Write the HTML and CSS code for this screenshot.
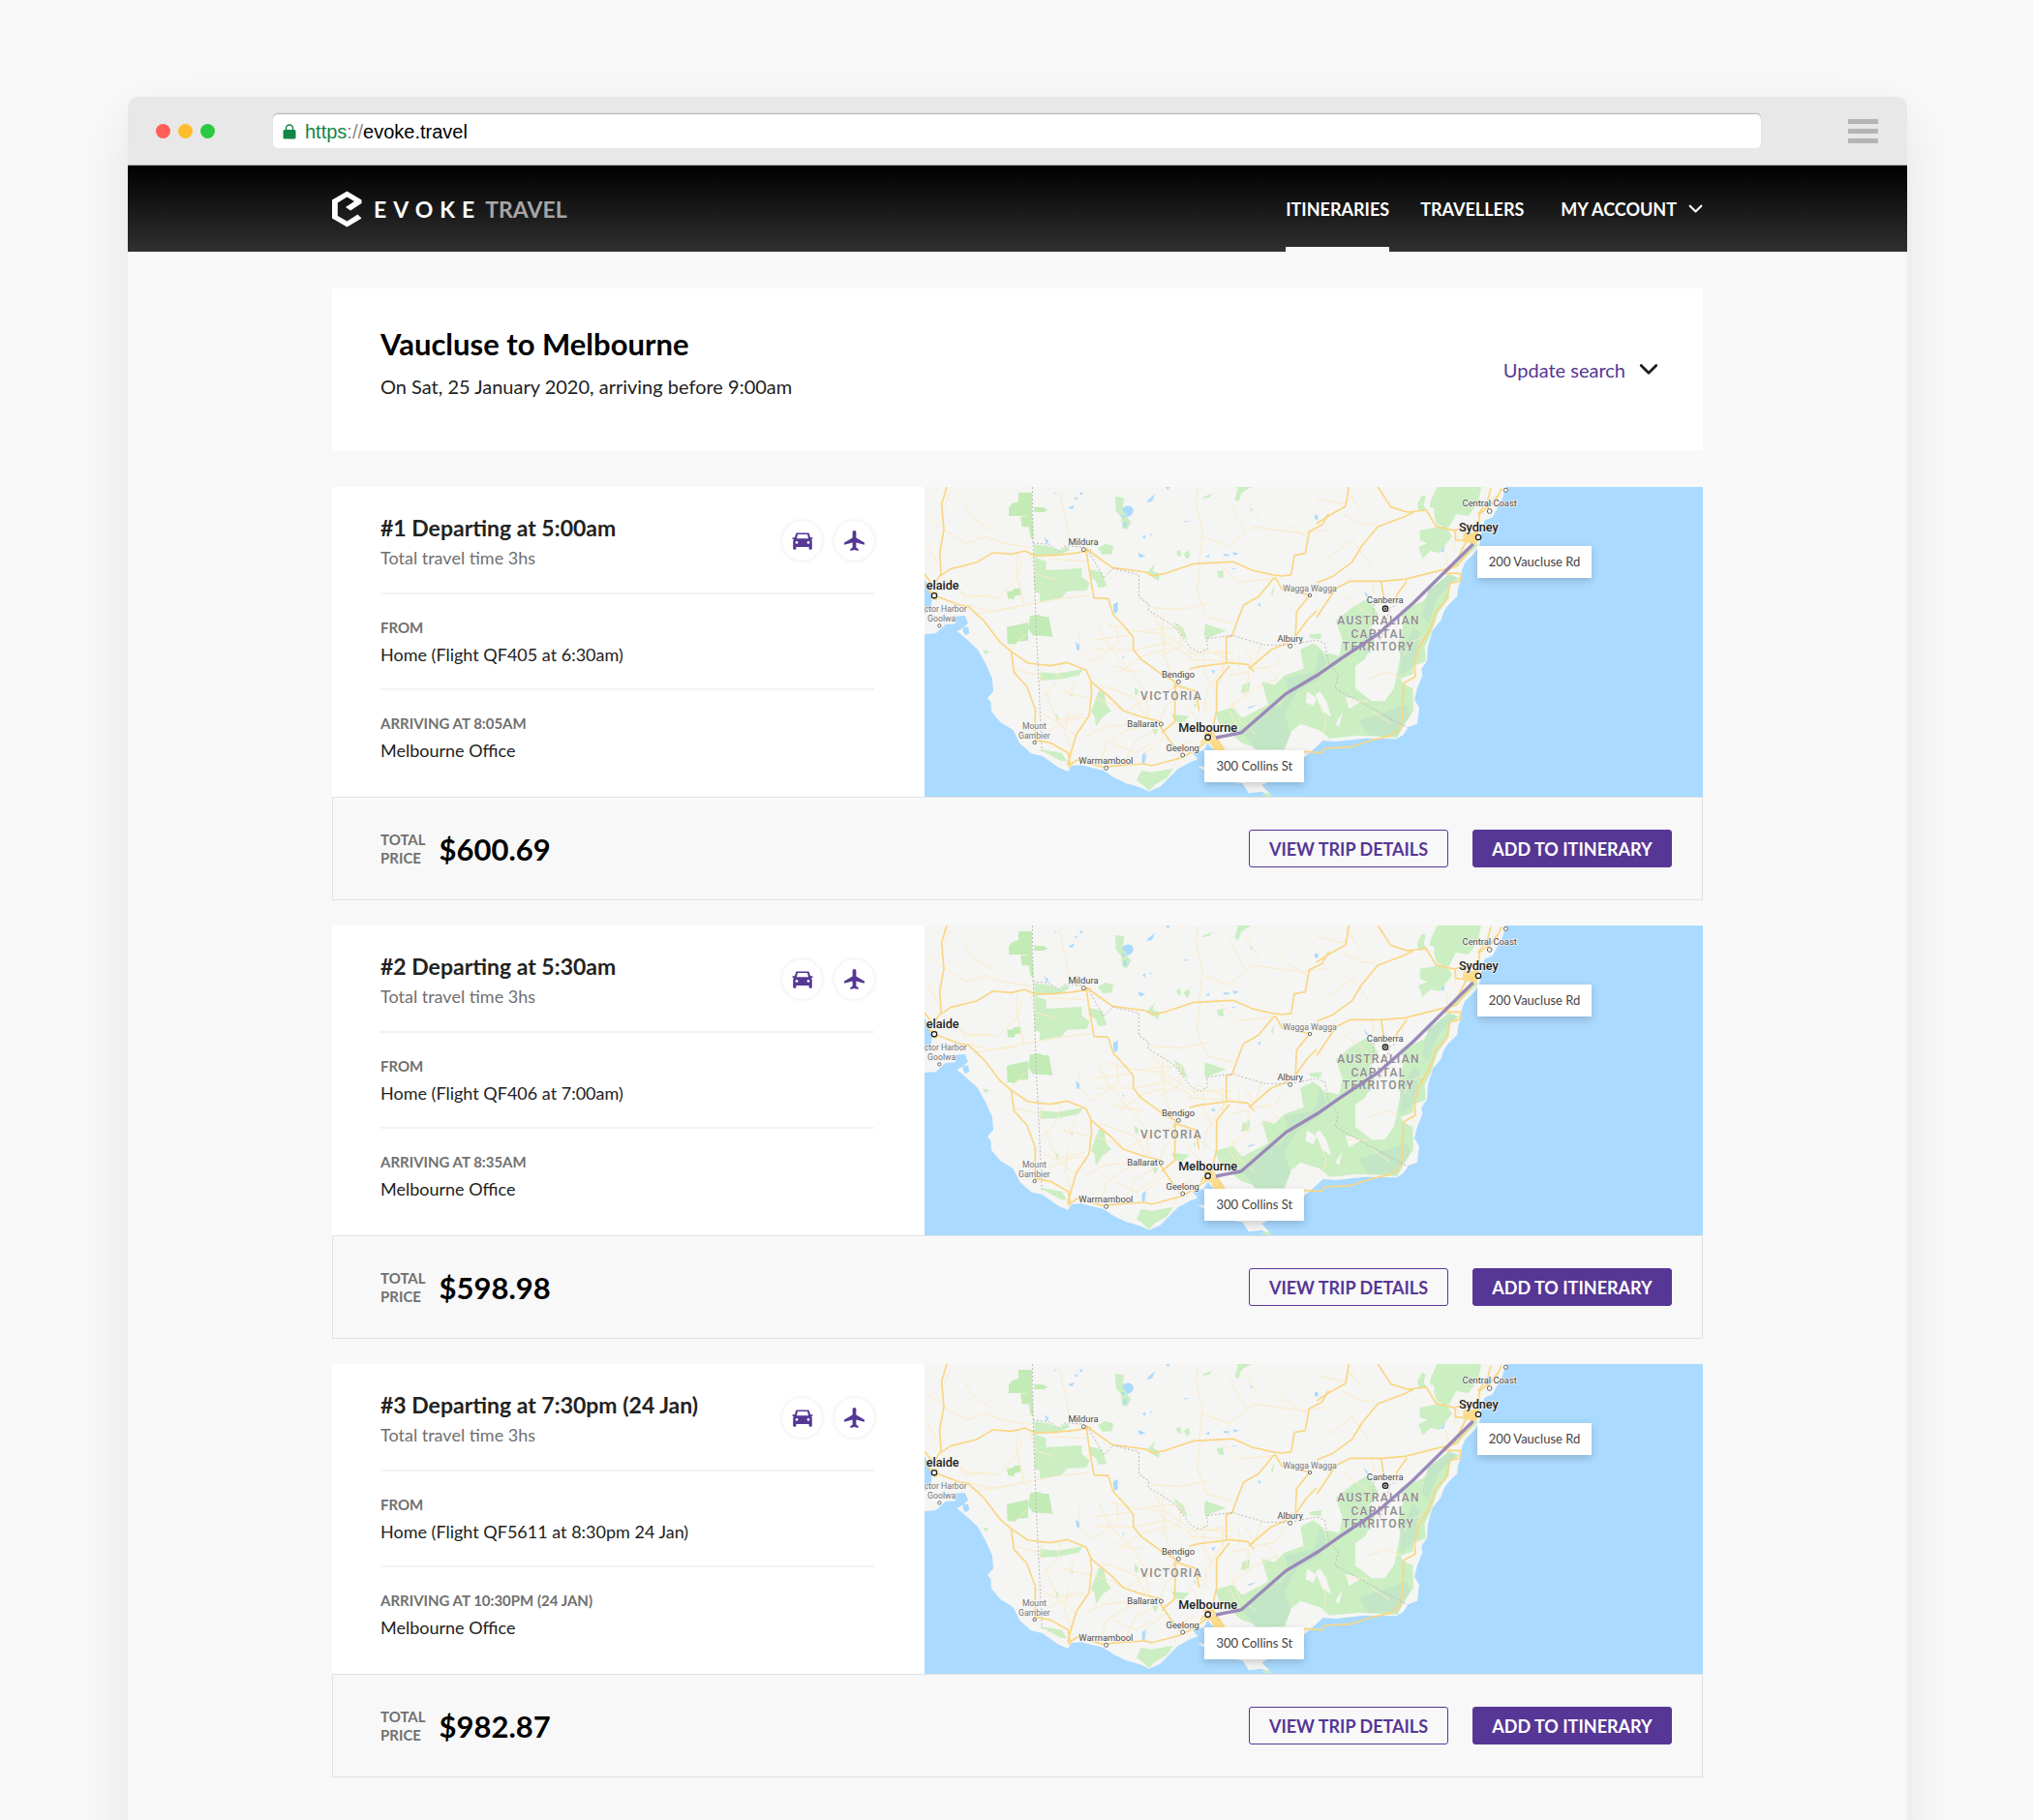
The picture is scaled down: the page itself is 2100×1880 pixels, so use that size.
FILE: index.html
```html
<!DOCTYPE html>
<html lang="en">
<head>
<meta charset="utf-8">
<title>Evoke Travel</title>
<meta name="viewport" content="width=device-width, initial-scale=1">
<link rel="stylesheet" href="styles.css">
</head>
<body>
<svg class="defs" width="0" height="0" aria-hidden="true">
  <symbol id="icon-car" viewBox="0 0 22 18">
    <path fill-rule="evenodd" d="M5.600 .6h10.800c.9 0 1.500.5 1.700 1.300l1 3.400h1.700c.5 0 .8.300.8.800s-.3.900-.8.900h-.9c.6.500.9 1.200.9 2v7.800c0 .600-.4.900-1 .900h-1.200c-.6 0-1-.3-1-.900V15H4.400v1.800c0 .600-.4.900-1 .900H2.200c-.6 0-1-.3-1-.900V9c0-.800.3-1.500.9-2h-.9c-.5 0-.8-.4-.8-.9s.3-.8.8-.8h1.700l1-3.400C4.100 1.100 4.700.6 5.600.6zM6 2.100 4.900 6.300h12.200L16 2.100zM5 9a1.400 1.400 0 1 0 0 2.800 1.400 1.400 0 0 0 0-2.800zm12 0a1.400 1.400 0 1 0 0 2.800 1.400 1.400 0 0 0 0-2.800z"/>
  </symbol>
  <symbol id="icon-plane" viewBox="0 0 24 24">
    <path d="M22 16v-2l-8.200-5V3.700c0-1-.8-1.700-1.800-1.700s-1.800.7-1.800 1.700V9L2 14v2l8.200-2.200V18.800L8 20.500V22l4-1 4 1v-1.500L13.800 18.800v-5L22 16z"/>
  </symbol>
  <symbol id="icon-chevron" viewBox="0 0 18 12">
    <path d="M2 2l7 7 7-7" fill="none" stroke="currentColor" stroke-width="2.500" stroke-linecap="round" stroke-linejoin="round"/>
  </symbol>
  <symbol id="terrain" viewBox="15 6 2412 960">
    <rect x="15" y="6" width="2412" height="960" fill="#aadaff"/>
    <path class="land" d="M15 6H1816L1805 45 1775 100 1750 110 1740 150 1735 185 1720 210 1690 240 1680 265 1677 295 1668 320 1666 345 1640 370 1625 390 1615 420 1590 450 1575 500 1572 545 1555 570 1558 590 1542 630 1533 665 1548 690 1542 740 1515 750 1498 775 1478 787 1380 785 1290 795 1250 792 1220 820 1190 845 1120 900 1060 930 1090 963 1060 950 1020 955 1000 925 950 918 900 895 862 872 888 872 935 850 925 825 905 815 893 800 880 822 845 830 862 850 840 858 800 880 760 920 745 935 710 950 690 940 660 930 640 925 600 905 570 885 500 868 470 870 460 888 430 875 380 840 345 832 310 800 290 760 250 735 222 702 220 672 210 660 228 640 225 600 205 555 180 510 150 482 115 452 128 447 150 428 140 405 100 408 112 430 80 432 50 460 15 462V398L34 390 38 350 28 320 15 290Z"/>
    <g class="park">
      <path class="reserve" d="M306 24h42v74h-16v-2h-56V70l12-14 18-4zM313 98h36l4 72-10-8-4-32h-22zM355 68l28 2 14 8-14 6h-28zM342 406l26-4 14 6h18l12 62-62-4-14-22zM270 440l66-14v56l-34 4-4 8-26-2zM270 330l18-2 6-8 20 0 0 20-20 4 0 10-20-2z"/>
      <path d="M355 184l44 6 36 14 20-14 10 10-30 16-80 8zM356 224l36 12v28l110-6v26l24 20-8 22-62 4-16 20-68 12v-26l-16-6zM552 196l24-14 24 8-4 24-30 2zM528 262l36 8 16 44-26 4-8-20-20-14zM606 36l28 4-4 26 8 12 8 26 10 10-14 24-14-4-4-34-16-20zM796 204l12-2 2 20-12-4zM818 214l16-12 4 18-10 10zM704 272l26-28-8 22 22 10-4 22zM920 268l20-4 2 24-16-2zM980 6h50l-20 10-14 10-8 26-12-8 10-32zM876 38l30-12-8 12-20 4zM786 422l30 20 14 38-20-14zM884 430l66 22-44 16-20 12-4-16zM372 580l56 4 80-14-16 20-60 12-60 4zM556 636l16 8 6 36 16 20-28 20-20 30-4-36-12-10zM666 626l12 10-2 16-10-4zM196 512l20 4-12 10zM370 818l70 12 16 26-20-2-26-14zM420 706l12 16-6 6zM780 710l56 6-26 24-20-10zM850 676l8 6-6 12zM720 756l20 0-10 20zM672 916l14-30 34 4 66-12-20 30-36 20-20 20-18-18zM1206 464l40-4-4 18-30-4zM468 650l8-4-4 14zM1100 310l-12 26 6 6zM1056 960l30-8 2 14zM1000 620l24-10-4 30-24 6z"/>
      <path d="M1604 6h136l-10 50-30 40-38-6-22 42-38-10-8-30 0-20-14-4 4-20zM1550 140l80-14 20 34-40 50-28-6-24 24-12-36 28-12-24-8zM1542 60l14-28 12 4-6 28 10 14-26 2zM1720 176l10 10-40 40-30 30-26 8 30-40z"/>
      <path d="M1610 300L1640 275 1672 290 1644 310 1640 350 1605 400 1585 460 1565 500 1568 546 1530 560 1528 620 1530 700 1500 745 1480 783 1360 776 1270 785 1240 760 1180 740 1120 790 1070 822 1000 800 930 745 915 705 970 690 1000 722 1080 680 1060 610 1100 620 1130 590 1190 570 1180 510 1220 490 1260 520 1300 530 1310 480 1290 420 1340 380 1390 350 1420 400 1390 450 1410 480 1380 540 1350 560 1350 630 1400 670 1440 670 1470 630 1490 530 1480 500 1500 430 1490 390 1560 360Z"/>
    </g>
    <path class="forest" d="M1240 510l20 40-20 50-70 40-40 70 20 60-20 50-90 0-48-60 60-30 20-36 50-12 22-36-12-46 40-10 50-10zM1360 730l60-20 90-30 10 30-40 66-90 0zM1530 440l20 20-20 100-40 30 0-70zM1640 280l26 6-60 60-30 80-20-20 20-80z"/>
    <path class="land" d="M1490 600l40-14-2 44-30-14zM1240 640l20 30 16 50-30-20-20-50zM1150 785l60-14 40 14-50 16-60 20zM1310 704l-10 46-12-10zM1320 656l50 14-40 24zM1240 505l30-14 20 20-30 14zM1200 640l30 20-10 24-24-10z"/>
    <g class="lake">
      <path d="M628 76c8-16 30-14 34 0 2 16-16 26-22 20 2-14-12-8-12-20zM624 92l14 4-6 8zM632 118l8-6v20l-8-4zM676 210l24 10-18 6zM690 160l10-6-2 14zM712 152l8 0-4 6zM706 48l24-20-10 22-16 4zM762 6l14-4-6 14zM460 70l20-8-8 14zM478 42l12-6-4 10zM496 20l10 6-8 6zM418 22l8 4-6 2zM386 162l14 12-6 10zM484 486l12 12-2 16-8-4zM600 370l14-8 0 30-10 8-4-16zM134 440l16 0 4 18-12 8-8-12zM1224 94l10-2v16l-10-4zM1046 370l10-4v12zM902 576l14-4-4 12zM1018 688l26-6-24 12zM820 112h18l-16 4zM886 222l12-8-2 12zM940 214h18v6h-14zM970 208l20 4-16 6zM968 258h16l-14 4zM1022 70l10 8-4 4zM1614 206l14-18-4 20zM1380 500l18 14-4 8zM690 836l10-8 4 12-10 26-6-10zM628 530l6 0-2 10zM1376 328l14 14-6 4z"/>
    </g>
    <g class="minor">
      <path d="M15 90l60 50M76 140l70 40 60-20 50 20 90 14M95 20l-20 50M140 60l20 40 60 40M62 280l80 60 100 10 60-60 14-50M305 210l-6 60 26 110M110 300l30 50 80-10M145 372l80 20 100-20 110-20 90-10M170 400l130-20M15 180l40 60M340 214l20 60 60 20M432 20l20 80 10 60 30 40M404 230l110 6M680 340l40 40 90 6 90-20M870 240l-10 90 30 80 80 20M866 240l10-100-20-80 6-50M876 160l80 30 80-60 150 20 74-10M960 50l30 60 20 30M1010 40l40 60M1110 90l40 40 50 30M1100 290l-110 10-70-60"/>
      <path d="M496 450v60l40 40 80-60-6-50M540 480l120-16M540 510h130l90-20M556 440l30 60 60 70 40 10M584 432l80 20 90 10 50 30 60 40M620 580l70-50 70-20M600 560l60 20 40 60 10 80M720 400l40 60-4 60 20 60M756 400l-8 80 90 50 30 40M700 450l110-10-4 60-60 30M840 520h130M830 540l110 6M880 520v60l30 50M860 500l70 30 50 20M910 520l30-10v80l-20 40M990 520v50M1010 510l30 60 60-10 30-40M950 550l-60 90-10 60M960 590l60-12M1020 580l-10 70M1070 560l40 40-70 30-80 60M970 670l20 60 50 40M1060 490l-20 60M780 620l60 20 60 60M640 700l60-40 90-30M700 720l-30-60-110-40M540 660l60 20 30 20M440 560l-20 60-40 40M440 640l90 20M390 640l40 100 60 40M360 700l60 30 90-20M400 760l60-30 50-10M470 830l-20-60 10-70M510 780l60-30 90-10M560 860l20-60 60-40 100-20M600 800l70 30 50-30M640 850l30-60 60-30M700 870v-40l60-50M790 870l20-60 40-20M480 610l-20 40M380 560l-10 60M290 570l80 20M270 520l60-60M740 750l20-60 30-30M830 690l50 60M960 700l30 60"/>
      <path d="M1230 40l80 20 40-30M1330 30l40 50M1310 90l60 30 40 0M1260 230l80-60 60 80M1400 300l10 40M1310 340l80 60M1390 600l60-20 40 20M1400 700l60 40M1320 670l70 0M1560 470l-40 20-20 40M1240 680l20 50-10 40M1640 270l-10-60M1674 140l-20 60"/>
    </g>
    <g class="road">
      <path d="M84 6L68 60 75 140 62 210 66 275 30 330 44 342M15 276l30 40M66 280l30-20 80-20 50-30 60 4 40-10 30 14 60 0 60-6 56-10M515 196l26 20 56 40 104 14 20 12 40-8 90-30 120-6 60 26 60 14 34 4 26-4 10-60 34-6 12-68 40-20 20-36M44 342l80 30 26 4 50 46 50 66 36 30 50 34 70 8 50-10 60 24 16 36 60 50 40 40 60 20 50 12 6 20 24 36 30 40M516 200l10 70 14 80 44 2 16 50 34 36 28 34 0 38 24 30 60 44 46 26 0 34-2 90-40 34M284 518l8 62 40 44 26 70v96l50 10 52 30 6 36M465 876l-6-12 26-90 40-60 8-70-4-34M462 870l26-18 80 22 60-6 70-4 20 6 90-24 24-12 60-40M866 700l-10-60-60-20-10 10M1100 286l-50 60-46 26-20 50-16 46-18 4v80l-80 10-34 8M950 550l66 6 20 24M1020 570l70-60 50-20M1102 286l20 36 90 20M1208 342l-40 50-4 90M904 770l16-70v-90l40-50"/>
      <path d="M1230 120l30-20 60-34 10-60M1420 6l40 62 50 16 60-6 30 50 60 14M1230 303l50-20 60-44 30-50 50-60 80-30 30-14M1290 320l44-22 100 0 70-6 80-20 80-20 40-50 30-40M1430 300l10 60M1510 298l-30 40-6 20M1230 410l40-60 20-30M1150 490l50-70 30-30M1696 170l-40 80-30 24 50 0-2 24-30 6-14 56-30 30-20 60-36 60-10 50 2 34-36 20-4 110-10 34-30 20-60 14-60 20-80 4-10 14-50-4-100 14M1730 170l4-80 50-40 20-40M1760 74l30-40"/>
      <path d="M1770 10l-10 40-30 40M1660 140l40-10 30 20-20 24-50-4zM1680 130l30 46M1700 120v50M870 800l30-30 40 50M880 770l30 0 34 50"/>
      <path class="urban" d="M874 790l14-12 22 10 36 34-34 0-10-20zM1684 150l42-4 4 26-10 10-36-6zM36 330l20 4-2 24-16-6z"/>
    </g>
    <g class="state-line">
      <path d="M349 6l2 160 10 280 18 380M351 180l50 4 30 20 20-16 50 4 20 10 50 86 28-30 80 20v70l30 20v20l80 50 50 66 30 16 24-14-4-30 80-10 100 30 80 0 80-16 26 10 12 60 30 40-10 40 230 125M1408 370l-10 90 30 20 30-100 20-8"/>
    </g>
  </symbol>
</svg>

<div class="browser">
  <div class="toolbar">
    <div class="lights"><span class="light light-red"></span><span class="light light-amber"></span><span class="light light-green"></span></div>
    <div class="address">
      <svg class="lock" viewBox="0 0 14 16" aria-hidden="true"><path d="M3.500 7V4.500a3.500 3.500 0 0 1 7 0V7" fill="none" stroke="currentColor" stroke-width="1.500"/><rect x="0.500" y="6" width="13" height="9.500" rx="1.500" fill="currentColor"/></svg>
      <span><span class="scheme">https</span><span class="sep">://</span>evoke.travel</span>
    </div>
    <button class="menu" aria-label="Menu"><span></span><span></span><span></span></button>
  </div>

  <header class="site-header">
    <div class="container header-row">
      <a class="brand" href="#">
        <svg class="brand-mark" viewBox="0 0 31 38" aria-hidden="true"><path d="M15.500 .5L30.500 9.500V13L19 20.500 14 17 23 11 15.500 6.500 5.800 12.500V26L15.500 31.500 26.500 24.500 30.500 28.500 15.500 37.500 0 28.500V9.500Z" fill="currentColor"/></svg>
        <span class="brand-name">EVOKE</span><span class="brand-sub">TRAVEL</span>
      </a>
      <nav class="nav">
        <a class="nav-link active" href="#">ITINERARIES</a>
        <a class="nav-link" href="#">TRAVELLERS</a>
        <button class="nav-link account">MY ACCOUNT <svg class="chevron-small"><use href="#icon-chevron"/></svg></button>
      </nav>
    </div>
  </header>

  <main class="container content">
    <section class="search">
      <div class="search-text">
        <h1>Vaucluse to Melbourne</h1>
        <p>On Sat, 25 January 2020, arriving before 9:00am</p>
      </div>
      <button class="update">Update search <svg class="chevron"><use href="#icon-chevron"/></svg></button>
    </section>

    <article class="trip">
      <div class="trip-body">
        <div class="details">
          <div class="trip-head">
            <div><h2>#1 Departing at 5:00am</h2><p class="duration">Total travel time 3hs</p></div>
            <div class="modes"><span class="mode"><svg class="car"><use href="#icon-car"/></svg></span><span class="mode"><svg class="plane"><use href="#icon-plane"/></svg></span></div>
          </div>
          <div class="leg"><h3>FROM</h3><p>Home (Flight QF405 at 6:30am)</p></div>
          <div class="leg"><h3>ARRIVING AT 8:05AM</h3><p>Melbourne Office</p></div>
        </div>
        <div class="map">
          <svg class="map-art" viewBox="15 6 2412 960" preserveAspectRatio="none">
            <use href="#terrain" x="15" y="6" width="2412" height="960"/>
            <g class="dots"><circle cx="508" cy="200" r="6"/><circle cx="61" cy="436" r="5"/><circle cx="802" cy="610" r="6"/><circle cx="748" cy="741" r="6"/><circle cx="815" cy="837" r="6"/><circle cx="578" cy="877" r="6"/><circle cx="356" cy="798" r="5"/><circle cx="1148" cy="499" r="6"/><circle cx="1209" cy="342" r="5"/><circle cx="1766" cy="81" r="7"/><circle cx="1816" cy="16" r="6"/><circle class="big" cx="45" cy="343" r="8"/><circle class="big" cx="893" cy="782" r="8"/><circle class="big" cx="1731" cy="162" r="8"/><circle class="big" cx="1443" cy="383" r="8"/><circle class="core" cx="1443" cy="383" r="3"/></g>
            <g class="labels">
              <text x="507" y="186">Mildura</text><text x="801" y="597">Bendigo</text><text x="690" y="751">Ballarat</text><text x="815" y="824">Geelong</text><text x="577" y="863">Warrnambool</text><text x="1148" y="486">Albury</text><text x="1442" y="366">Canberra</text><text x="1766" y="66">Central Coast</text>
              <text class="minor-town" x="355" y="755">Mount</text><text class="minor-town" x="355" y="785">Gambier</text><text class="minor-town" x="1209" y="330">Wagga Wagga</text><text class="minor-town" x="80" y="393">ctor Harbor</text><text class="minor-town" x="68" y="424">Goolwa</text>
              <text class="city" x="71" y="325">elaide</text><text class="city" x="893" y="764">Melbourne</text><text class="city" x="1732" y="144">Sydney</text>
              <text class="region" x="780" y="665">VICTORIA</text><text class="region" x="1422" y="433">AUSTRALIAN</text><text class="region" x="1422" y="474">CAPITAL</text><text class="region" x="1422" y="514">TERRITORY</text>
            </g>
            <path class="route" d="M918 783l78-15 140-122 98-58 66-46 120-80 110-97 185-182"/>
          </svg>
          <span class="pin pin-start">200 Vaucluse Rd</span><span class="pin pin-end">300 Collins St</span>
        </div>
      </div>
      <footer class="trip-foot">
        <div class="price"><span class="price-label">TOTAL<br>PRICE</span><strong>$600.69</strong></div>
        <div class="actions"><button class="btn">VIEW TRIP DETAILS</button><button class="btn btn-primary">ADD TO ITINERARY</button></div>
      </footer>
    </article>

    <article class="trip">
      <div class="trip-body">
        <div class="details">
          <div class="trip-head">
            <div><h2>#2 Departing at 5:30am</h2><p class="duration">Total travel time 3hs</p></div>
            <div class="modes"><span class="mode"><svg class="car"><use href="#icon-car"/></svg></span><span class="mode"><svg class="plane"><use href="#icon-plane"/></svg></span></div>
          </div>
          <div class="leg"><h3>FROM</h3><p>Home (Flight QF406 at 7:00am)</p></div>
          <div class="leg"><h3>ARRIVING AT 8:35AM</h3><p>Melbourne Office</p></div>
        </div>
        <div class="map">
          <svg class="map-art" viewBox="15 6 2412 960" preserveAspectRatio="none">
            <use href="#terrain" x="15" y="6" width="2412" height="960"/>
            <g class="dots"><circle cx="508" cy="200" r="6"/><circle cx="61" cy="436" r="5"/><circle cx="802" cy="610" r="6"/><circle cx="748" cy="741" r="6"/><circle cx="815" cy="837" r="6"/><circle cx="578" cy="877" r="6"/><circle cx="356" cy="798" r="5"/><circle cx="1148" cy="499" r="6"/><circle cx="1209" cy="342" r="5"/><circle cx="1766" cy="81" r="7"/><circle cx="1816" cy="16" r="6"/><circle class="big" cx="45" cy="343" r="8"/><circle class="big" cx="893" cy="782" r="8"/><circle class="big" cx="1731" cy="162" r="8"/><circle class="big" cx="1443" cy="383" r="8"/><circle class="core" cx="1443" cy="383" r="3"/></g>
            <g class="labels">
              <text x="507" y="186">Mildura</text><text x="801" y="597">Bendigo</text><text x="690" y="751">Ballarat</text><text x="815" y="824">Geelong</text><text x="577" y="863">Warrnambool</text><text x="1148" y="486">Albury</text><text x="1442" y="366">Canberra</text><text x="1766" y="66">Central Coast</text>
              <text class="minor-town" x="355" y="755">Mount</text><text class="minor-town" x="355" y="785">Gambier</text><text class="minor-town" x="1209" y="330">Wagga Wagga</text><text class="minor-town" x="80" y="393">ctor Harbor</text><text class="minor-town" x="68" y="424">Goolwa</text>
              <text class="city" x="71" y="325">elaide</text><text class="city" x="893" y="764">Melbourne</text><text class="city" x="1732" y="144">Sydney</text>
              <text class="region" x="780" y="665">VICTORIA</text><text class="region" x="1422" y="433">AUSTRALIAN</text><text class="region" x="1422" y="474">CAPITAL</text><text class="region" x="1422" y="514">TERRITORY</text>
            </g>
            <path class="route" d="M918 783l78-15 140-122 98-58 66-46 120-80 110-97 185-182"/>
          </svg>
          <span class="pin pin-start">200 Vaucluse Rd</span><span class="pin pin-end">300 Collins St</span>
        </div>
      </div>
      <footer class="trip-foot">
        <div class="price"><span class="price-label">TOTAL<br>PRICE</span><strong>$598.98</strong></div>
        <div class="actions"><button class="btn">VIEW TRIP DETAILS</button><button class="btn btn-primary">ADD TO ITINERARY</button></div>
      </footer>
    </article>

    <article class="trip">
      <div class="trip-body">
        <div class="details">
          <div class="trip-head">
            <div><h2>#3 Departing at 7:30pm (24 Jan)</h2><p class="duration">Total travel time 3hs</p></div>
            <div class="modes"><span class="mode"><svg class="car"><use href="#icon-car"/></svg></span><span class="mode"><svg class="plane"><use href="#icon-plane"/></svg></span></div>
          </div>
          <div class="leg"><h3>FROM</h3><p>Home (Flight QF5611 at 8:30pm 24 Jan)</p></div>
          <div class="leg"><h3>ARRIVING AT 10:30PM (24 JAN)</h3><p>Melbourne Office</p></div>
        </div>
        <div class="map">
          <svg class="map-art" viewBox="15 6 2412 960" preserveAspectRatio="none">
            <use href="#terrain" x="15" y="6" width="2412" height="960"/>
            <g class="dots"><circle cx="508" cy="200" r="6"/><circle cx="61" cy="436" r="5"/><circle cx="802" cy="610" r="6"/><circle cx="748" cy="741" r="6"/><circle cx="815" cy="837" r="6"/><circle cx="578" cy="877" r="6"/><circle cx="356" cy="798" r="5"/><circle cx="1148" cy="499" r="6"/><circle cx="1209" cy="342" r="5"/><circle cx="1766" cy="81" r="7"/><circle cx="1816" cy="16" r="6"/><circle class="big" cx="45" cy="343" r="8"/><circle class="big" cx="893" cy="782" r="8"/><circle class="big" cx="1731" cy="162" r="8"/><circle class="big" cx="1443" cy="383" r="8"/><circle class="core" cx="1443" cy="383" r="3"/></g>
            <g class="labels">
              <text x="507" y="186">Mildura</text><text x="801" y="597">Bendigo</text><text x="690" y="751">Ballarat</text><text x="815" y="824">Geelong</text><text x="577" y="863">Warrnambool</text><text x="1148" y="486">Albury</text><text x="1442" y="366">Canberra</text><text x="1766" y="66">Central Coast</text>
              <text class="minor-town" x="355" y="755">Mount</text><text class="minor-town" x="355" y="785">Gambier</text><text class="minor-town" x="1209" y="330">Wagga Wagga</text><text class="minor-town" x="80" y="393">ctor Harbor</text><text class="minor-town" x="68" y="424">Goolwa</text>
              <text class="city" x="71" y="325">elaide</text><text class="city" x="893" y="764">Melbourne</text><text class="city" x="1732" y="144">Sydney</text>
              <text class="region" x="780" y="665">VICTORIA</text><text class="region" x="1422" y="433">AUSTRALIAN</text><text class="region" x="1422" y="474">CAPITAL</text><text class="region" x="1422" y="514">TERRITORY</text>
            </g>
            <path class="route" d="M918 783l78-15 140-122 98-58 66-46 120-80 110-97 185-182"/>
          </svg>
          <span class="pin pin-start">200 Vaucluse Rd</span><span class="pin pin-end">300 Collins St</span>
        </div>
      </div>
      <footer class="trip-foot">
        <div class="price"><span class="price-label">TOTAL<br>PRICE</span><strong>$982.87</strong></div>
        <div class="actions"><button class="btn">VIEW TRIP DETAILS</button><button class="btn btn-primary">ADD TO ITINERARY</button></div>
      </footer>
    </article>
  </main>
</div>
</body>
</html>
```

FILE: styles.css
```css
* { box-sizing: border-box; }
body {
  margin: 0;
  padding: 100px 130px 0 132px;
  background: #f9f9f9;
  color: #222;
  font-family: Lato, "Liberation Sans", sans-serif;
  font-size: 18px;
  line-height: 24px;
}
h1, h2, h3, p { margin: 0; }
button { margin: 0; padding: 0; border: 0; background: none; font: inherit; color: inherit; cursor: pointer; }
a { color: inherit; text-decoration: none; }
.defs { position: absolute; }

.browser {
  border-radius: 10px 10px 0 0;
  background: #f8f8f8;
  box-shadow: 0 20px 60px rgba(0, 0, 0, 0.09);
}
.toolbar {
  display: flex;
  align-items: center;
  height: 71px;
  padding: 1px 30px 0 29px;
  border-bottom: 1px solid #a9adad;
  border-radius: 10px 10px 0 0;
  background: #e8e8e8;
}
.lights { display: flex; gap: 8px; margin-right: 60px; }
.light { width: 15px; height: 15px; border-radius: 50%; }
.light-red { background: #ff5f57; }
.light-amber { background: #ffbd2e; }
.light-green { background: #28ca42; }
.address {
  display: flex;
  flex: 1;
  align-items: center;
  gap: 9px;
  height: 35px;
  padding: 1px 0 0 10px;
  border-radius: 5px;
  background: #fff;
  box-shadow: 0 -1px 1px rgba(0, 0, 0, 0.25);
  color: #000;
  font-family: "Liberation Sans", Arial, sans-serif;
  font-size: 20px;
}
.lock { width: 14px; height: 16px; color: #128647; }
.scheme { color: #128647; }
.sep { color: #888; }
.menu { display: grid; gap: 5px; width: 31px; margin-left: 90px; }
.menu span { height: 5px; background: #b4b4b4; }

.container { max-width: 1416px; margin: 0 auto; }
.site-header { background: linear-gradient(#000, #303030); color: #fff; }
.header-row { display: flex; align-items: stretch; justify-content: space-between; height: 89px; }
.brand { display: flex; align-items: center; font-size: 23px; font-weight: 700; }
.brand-mark { width: 31px; height: 38px; margin-right: 12px; }
.brand-name { letter-spacing: 7px; margin-right: 4px; }
.brand-sub { color: #a6a6a6; }
.nav { display: flex; }
.nav-link {
  display: flex;
  align-items: center;
  margin-left: 32px;
  border-top: 5px solid transparent;
  border-bottom: 5px solid transparent;
  font-weight: 700;
}
.nav-link.active { border-bottom-color: #f8f8f8; }
.account { gap: 12px; margin-left: 38px; }
.chevron-small { width: 15px; height: 10px; }

.content { padding: 38px 0 60px; }
.search {
  display: flex;
  align-items: center;
  justify-content: space-between;
  min-height: 167px;
  margin-bottom: 38px;
  padding: 0 46px 0 50px;
  background: #fff;
}
.search-text { padding-bottom: 18px; }
h1 { color: #000; font-size: 31px; line-height: 40px; }
.search p { margin-top: 12px; font-size: 20px; }
.update { display: flex; align-items: center; gap: 14px; color: #563795; font-size: 20px; }
.chevron { width: 20px; height: 14px; color: #1e1e1e; }

.trip { margin-bottom: 26px; }
.trip-body { display: grid; grid-template-columns: 612fr 804fr; }
.details { padding: 28px 52px 0 50px; background: #fff; }
.trip-head { display: flex; justify-content: space-between; padding-bottom: 24px; }
h2 { font-size: 23px; line-height: 28px; }
.duration { margin-top: 5px; color: #707070; }
.modes { display: flex; gap: 13px; padding-top: 7px; }
.mode {
  display: grid;
  place-items: center;
  width: 41px;
  height: 41px;
  border-radius: 50%;
  box-shadow: 0 0 5px rgba(0, 0, 0, 0.1);
}
.mode svg { fill: #563795; }
.car { width: 22px; height: 18px; }
.plane { width: 25px; height: 25px; }
.leg { padding: 22px 0 23px; border-top: 2px solid #f3f3f3; }
h3 { color: #707070; font-size: 15px; line-height: 24px; }
.leg p { margin-top: 4px; }

.map { position: relative; height: 320px; overflow: hidden; background: #aadaff; }
.map-art { display: block; width: 100%; height: 100%; }
.land { fill: #f5f5f3; }
.park { fill: #cbeec2; }
.reserve { fill: #c2ebb5; }
.forest { fill: #c3e6c6; }
.lake { fill: #aadaff; }
.minor { fill: none; stroke: #fcebc6; stroke-width: 3; }
.road { fill: none; stroke: #fad683; stroke-width: 5; stroke-linejoin: round; }
.urban { fill: #fddc8a; stroke: none; }
.state-line { fill: none; stroke: #bbb; stroke-width: 3; stroke-dasharray: 6 6; }
.route { fill: none; stroke: #9a89b8; stroke-width: 10; }
.dots circle { fill: #fff; stroke: #666; stroke-width: 3; }
.dots .big { stroke: #222; stroke-width: 4; }
.dots .core { fill: #222; }
.labels { fill: #4a4a4a; stroke: #f5f5f3; stroke-width: 4; paint-order: stroke; font-family: Roboto, sans-serif; font-size: 28px; text-anchor: middle; }
.labels .minor-town { fill: #777; font-size: 26px; }
.labels .city { fill: #222; font-size: 38px; font-weight: 500; }
.labels .region { fill: #8c8c8c; stroke-width: 2; font-size: 36px; font-weight: 500; letter-spacing: 4px; }
.pin {
  position: absolute;
  padding: 0 12px;
  background: #fff;
  box-shadow: 0 3px 8px rgba(0, 0, 0, 0.18);
  color: #444;
  font-size: 13px;
  line-height: 33px;
}
.pin-start { left: 71%; top: 61px; }
.pin-end { left: 36%; top: 272px; }

.trip-foot {
  display: flex;
  align-items: center;
  justify-content: space-between;
  min-height: 107px;
  padding: 0 31px 0 49px;
  border: 1px solid #e2e2e2;
  background: #f8f8f8;
}
.price { display: flex; align-items: center; gap: 14px; }
.price-label { color: #707070; font-size: 15px; font-weight: 700; line-height: 19px; }
.price strong { color: #000; font-size: 31px; line-height: 36px; }
.actions { display: flex; gap: 25px; }
.btn {
  width: 206px;
  height: 39px;
  border: 1px solid #563795;
  border-radius: 3px;
  color: #563795;
  font-weight: 700;
}
.btn-primary { background: #563795; color: #fff; }
```
